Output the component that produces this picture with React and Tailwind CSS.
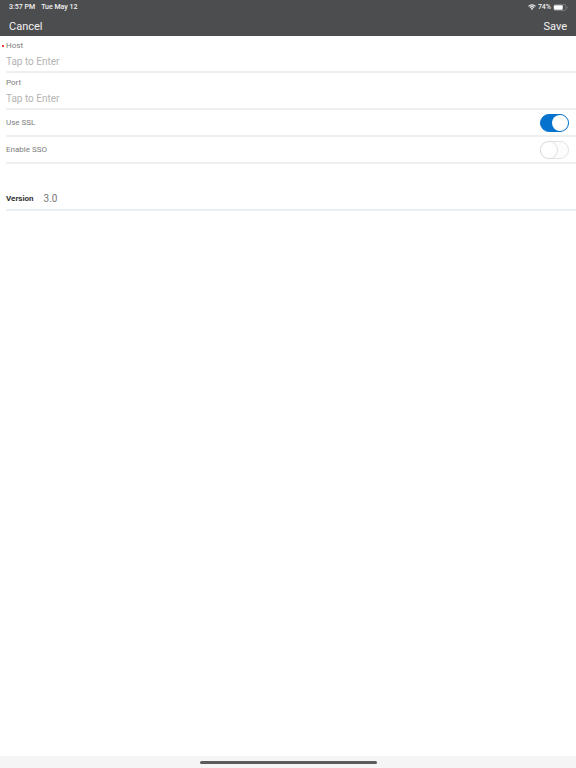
import React, { useState } from "react";

const TextField = ({ id, label, required, value, onChange }) => (
  <div className="ml-1.5 border-b-2 border-[#eeeff0] pt-1 pb-[3px]">
    <label
      htmlFor={id}
      className="relative block text-[8px] leading-3 text-[#7d7d7d]"
    >
      {required && (
        <span className="absolute -left-1 top-[5px] size-0.5 rounded-full bg-[#f00018]" />
      )}
      {label}
    </label>
    <input
      id={id}
      type="text"
      required={required}
      value={value}
      onChange={(e) => onChange(e.target.value)}
      placeholder="Tap to Enter"
      className="mt-1 block h-3 w-full bg-transparent text-[10px] leading-3 text-[#555] outline-none placeholder:text-[#b4b4b4]"
    />
  </div>
);

const SwitchField = ({ id, label, checked, onChange }) => (
  <div className="ml-1.5 flex h-[27px] items-center justify-between border-b-2 border-[#eeeff0] pt-px pr-[7px]">
    <label htmlFor={id} className="text-[8px] leading-3 text-[#7d7d7d]">
      {label}
    </label>
    <input
      id={id}
      type="checkbox"
      role="switch"
      checked={checked}
      onChange={(e) => onChange(e.target.checked)}
      className="flex h-[18px] w-[29px] cursor-pointer appearance-none items-center rounded-full border border-[#e2e2e2] bg-[#fdfdfd] before:size-4 before:rounded-full before:bg-white before:shadow-[0_0_1px_1px_#dedede] checked:justify-end checked:border-[#0572ce] checked:bg-[#0572ce] checked:before:shadow-none"
    />
  </div>
);

const StatusBar = () => (
  <div className="flex h-3.5 items-center justify-between pl-[9px] pr-2 text-[7px] leading-none font-medium">
    <div className="flex gap-1.5">
      <span>3:57 PM</span>
      <span>Tue May 12</span>
    </div>
    <div className="flex items-center gap-0.5">
      {/* Wifi */}
      <svg viewBox="0 0 16 12" className="h-1.5 w-2" fill="none">
        <path d="M1 4.6a10 10 0 0 1 14 0" stroke="currentColor" strokeWidth="2.2" />
        <path d="M3.8 7.4a6 6 0 0 1 8.4 0" stroke="currentColor" strokeWidth="2.2" />
        <path d="M8 12 5.5 9.4a3.6 3.6 0 0 1 5 0z" fill="currentColor" />
      </svg>
      <span>74%</span>
      {/* Battery */}
      <svg viewBox="0 0 30 14" className="h-[7px] w-[15px]" fill="none">
        <rect x="1" y="1" width="25" height="12" rx="3.5" stroke="#8a8a8b" strokeWidth="1.4" />
        <rect x="2" y="2.4" width="17.5" height="9.2" rx="2" fill="#fff" />
        <path d="M27.6 4.8c2 .8 2 3.6 0 4.4z" fill="#8a8a8b" />
      </svg>
    </div>
  </div>
);

const App = () => {
  const [host, setHost] = useState("");
  const [port, setPort] = useState("");
  const [useSSL, setUseSSL] = useState(true);
  const [enableSSO, setEnableSSO] = useState(false);

  return (
    <div className="flex min-h-screen flex-col bg-white font-['Roboto','Liberation_Sans',sans-serif]">
      <header className="bg-[#4c4d4f] text-[#f2f2f2]">
        <StatusBar />
        <div className="flex h-[22px] items-center justify-between px-[9px] pt-1 text-[11px] leading-4">
          <button type="button" className="cursor-pointer">
            Cancel
          </button>
          <button type="button" className="cursor-pointer">
            Save
          </button>
        </div>
      </header>

      <main className="flex-1">
        <TextField id="host" label="Host" required value={host} onChange={setHost} />
        <TextField id="port" label="Port" value={port} onChange={setPort} />
        <SwitchField id="ssl" label="Use SSL" checked={useSSL} onChange={setUseSSL} />
        <SwitchField id="sso" label="Enable SSO" checked={enableSSO} onChange={setEnableSSO} />

        <div className="mt-6 ml-1.5 flex h-[23px] items-center gap-2.5 border-b-2 border-[#e8eef2]">
          <span className="text-[8px] leading-3 font-bold text-[#333]">Version</span>
          <span className="text-[10px] leading-3 text-[#777]">3.0</span>
        </div>
      </main>

      {/* Home indicator */}
      <footer className="flex h-3 items-center justify-center bg-[#f5f5f5]">
        <div className="h-[3px] w-[177px] rounded-full bg-[#5c5c5c]" />
      </footer>
    </div>
  );
};

export default App;
